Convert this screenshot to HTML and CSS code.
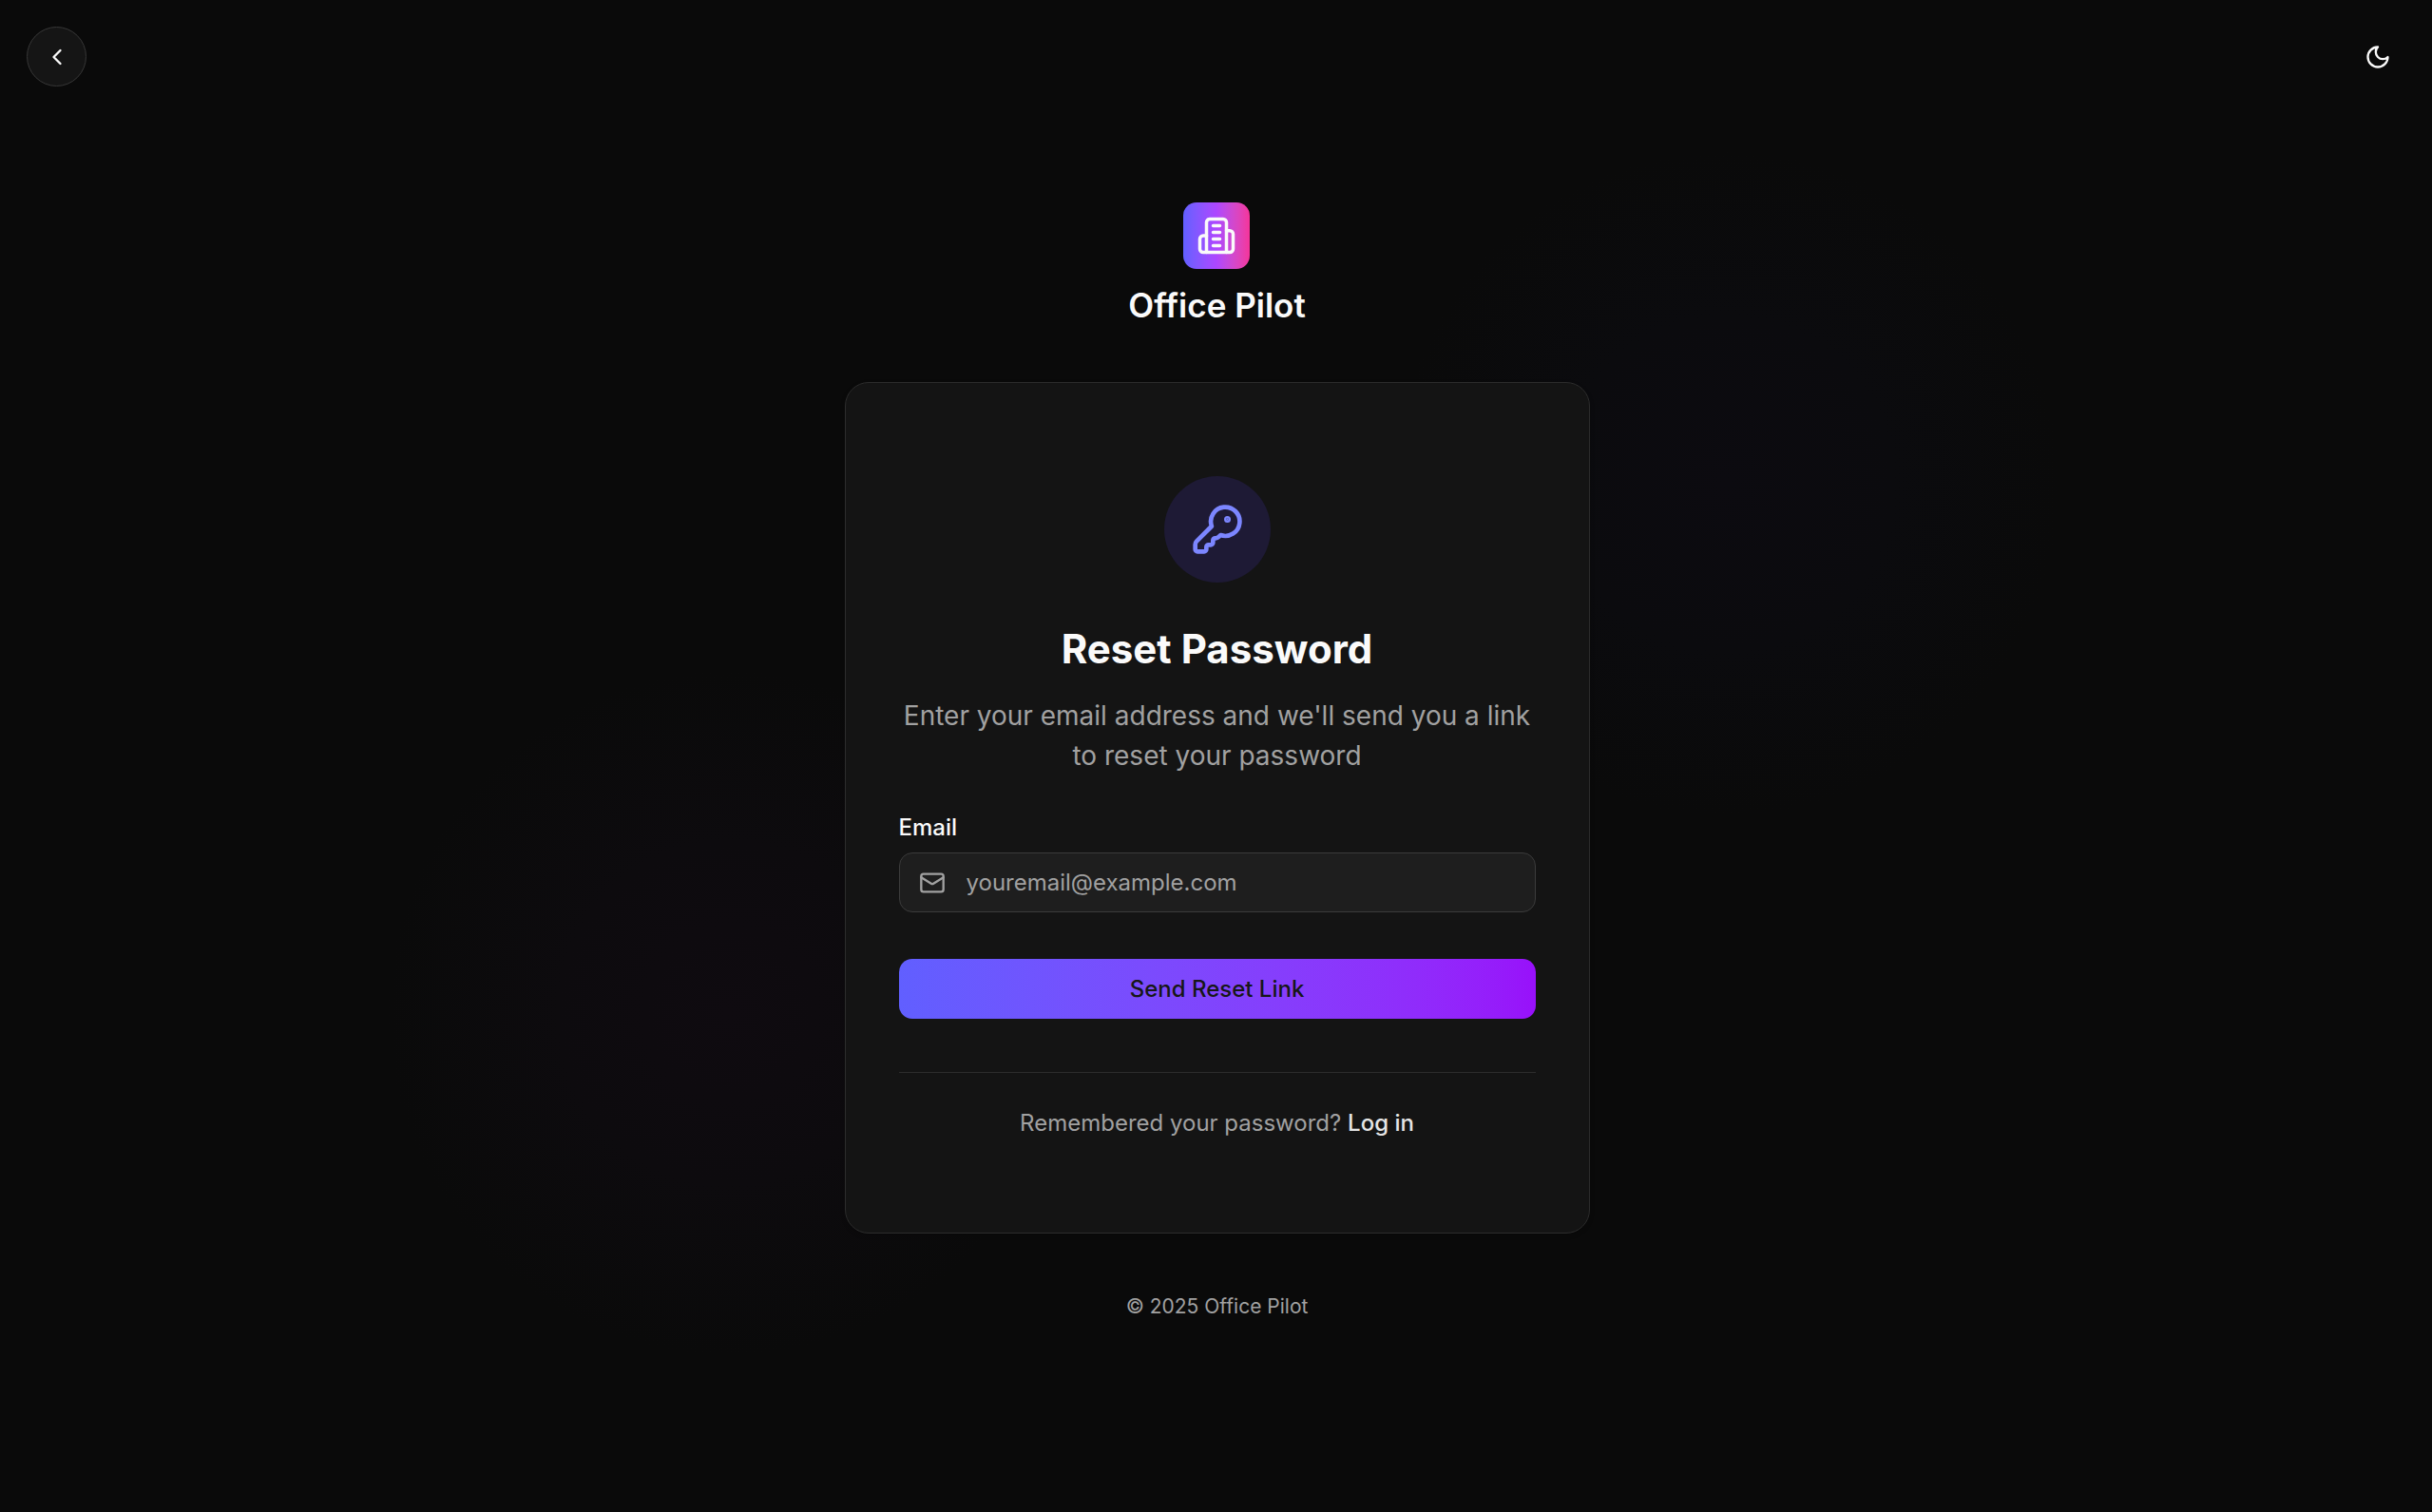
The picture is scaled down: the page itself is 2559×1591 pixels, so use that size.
FILE: index.html
```html
<!DOCTYPE html>
<html lang="en">
<head>
<meta charset="utf-8">
<meta name="viewport" content="width=device-width, initial-scale=1">
<title>Reset Password - Office Pilot</title>
<link rel="stylesheet" href="styles.css">
</head>
<body>
<div class="page">
  <header class="topbar">
    <button class="icon-button icon-button-outline" type="button" aria-label="Go back">
      <svg class="icon" viewBox="0 0 24 24"><path d="m15 18-6-6 6-6"/></svg>
    </button>
    <button class="icon-button" type="button" aria-label="Toggle theme">
      <svg class="icon" viewBox="0 0 24 24"><path d="M12 3a6 6 0 0 0 9 9 9 9 0 1 1-9-9Z"/></svg>
    </button>
  </header>
  <main class="content">
    <div class="brand">
      <div class="brand-mark">
        <svg class="icon icon-brand" viewBox="0 0 24 24"><path d="M6 22V4a2 2 0 0 1 2-2h8a2 2 0 0 1 2 2v18Z"/><path d="M6 12H4a2 2 0 0 0-2 2v6a2 2 0 0 0 2 2h2"/><path d="M18 9h2a2 2 0 0 1 2 2v9a2 2 0 0 1-2 2h-2"/><path d="M10 6h4M10 10h4M10 14h4M10 18h4"/></svg>
      </div>
      <div class="brand-name">Office Pilot</div>
    </div>
    <section class="card">
      <div class="card-badge">
        <svg class="icon icon-key" viewBox="0 0 24 24"><path d="M2.586 17.414A2 2 0 0 0 2 18.828V21a1 1 0 0 0 1 1h3a1 1 0 0 0 1-1v-1a1 1 0 0 1 1-1h1a1 1 0 0 0 1-1v-1a1 1 0 0 1 1-1h.172a2 2 0 0 0 1.414-.586l.814-.814a6.5 6.5 0 1 0-4-4z"/><circle cx="16.5" cy="7.5" r=".5" fill="currentColor"/></svg>
      </div>
      <h1 class="card-title">Reset Password</h1>
      <p class="card-text">Enter your email address and we'll send you a link to reset your password</p>
      <form class="form">
        <label class="label" for="email">Email</label>
        <div class="field">
          <svg class="icon icon-mail" viewBox="0 0 24 24"><rect x="2" y="4" width="20" height="16" rx="2"/><path d="m22 7-8.97 5.7a1.94 1.94 0 0 1-2.06 0L2 7"/></svg>
          <input class="input" id="email" type="email" placeholder="youremail@example.com">
        </div>
        <button class="submit" type="submit">Send Reset Link</button>
      </form>
      <p class="card-footer">Remembered your password? <a class="link" href="#login">Log in</a></p>
    </section>
    <footer class="copyright">© 2025 Office Pilot</footer>
  </main>
</div>
</body>
</html>
```
FILE: styles.css
```css
* {
  box-sizing: border-box;
}

body {
  margin: 0;
  background: #0a0a0a;
  color: #fafafa;
  font-family: Inter, "Liberation Sans", sans-serif;
  font-size: 24px;
  line-height: 35px;
}

h1,
p {
  margin: 0;
}

button,
input {
  font: inherit;
}

.page {
  min-height: 100vh;
  background:
    radial-gradient(circle 350px at 71% 32%, #0c0b10, #0b0b0e 50%, #0a0a0a00),
    radial-gradient(circle 360px at 30% 67%, #0f0b10, #0d0b0e 50%, #0a0a0a00);
}

.topbar {
  display: flex;
  justify-content: space-between;
  padding: 28px 26px 0 28px;
}

.icon {
  width: 28px;
  height: 28px;
  fill: none;
  stroke: currentColor;
  stroke-width: 2;
  stroke-linecap: round;
  stroke-linejoin: round;
}

.icon-button {
  display: grid;
  place-items: center;
  width: 63px;
  height: 63px;
  padding: 0;
  border: 0;
  border-radius: 50%;
  background: none;
  color: #fafafa;
}

.icon-button-outline {
  border: 1px solid #373737;
  background: #151515;
}

.content {
  display: flex;
  flex-direction: column;
  align-items: center;
  padding: 122px 0 56px 2px;
}

.brand {
  display: flex;
  flex-direction: column;
  align-items: center;
  gap: 14px;
}

.brand-mark {
  display: grid;
  place-items: center;
  width: 70px;
  height: 70px;
  border-radius: 14px;
  background: linear-gradient(90deg in oklab, #615fff, #ad46ff 50%, #f6339a);
}

.icon-brand {
  width: 42px;
  height: 42px;
}

.brand-name {
  font-size: 35px;
  font-weight: 600;
  line-height: 49px;
}

.card {
  width: 100%;
  max-width: 784px;
  margin-top: 56px;
  padding: 98px 56px;
  border: 1px solid #2c2c2c;
  border-radius: 25px;
  background: #141414;
  box-shadow: 0 2px 5px #0003;
  text-align: center;
}

.card-badge {
  display: grid;
  place-items: center;
  width: 112px;
  height: 112px;
  margin: 0 auto 42px;
  border-radius: 50%;
  background: #1e1a35;
  color: #7c86ff;
}

.icon-key {
  width: 56px;
  height: 56px;
}

.card-title {
  font-size: 42px;
  font-weight: 700;
  line-height: 56px;
}

.card-text {
  margin-top: 21px;
  color: #a1a1a1;
  font-size: 28px;
  line-height: 42px;
}

.form {
  display: flex;
  flex-direction: column;
  margin-top: 37px;
}

.label {
  font-weight: 500;
  text-align: left;
}

.field {
  display: grid;
  align-items: center;
  margin-top: 9px;
}

.icon-mail,
.input {
  grid-area: 1 / 1;
}

.icon-mail {
  z-index: 1;
  margin-left: 21px;
  color: #a1a1a1;
}

.input {
  width: 100%;
  height: 63px;
  padding: 0 20px 0 70px;
  border: 1px solid #3b3b3b;
  border-radius: 14px;
  background: #1e1e1e;
  color: #fafafa;
}

.input::placeholder {
  color: #a1a1a1;
  opacity: 1;
}

.submit {
  height: 63px;
  margin-top: 49px;
  border: 0;
  border-radius: 14px;
  background: linear-gradient(90deg in oklab, #615fff, #9810fa);
  color: #171717;
  font-weight: 500;
}

.card-footer {
  margin-top: 56px;
  padding-top: 35px;
  border-top: 1px solid #2c2c2c;
  color: #a1a1a1;
}

.link {
  color: #e5e5e5;
  font-weight: 500;
  text-decoration: none;
}

.copyright {
  margin-top: 63px;
  color: #a1a1a1;
  font-size: 21px;
  line-height: 28px;
}
```
